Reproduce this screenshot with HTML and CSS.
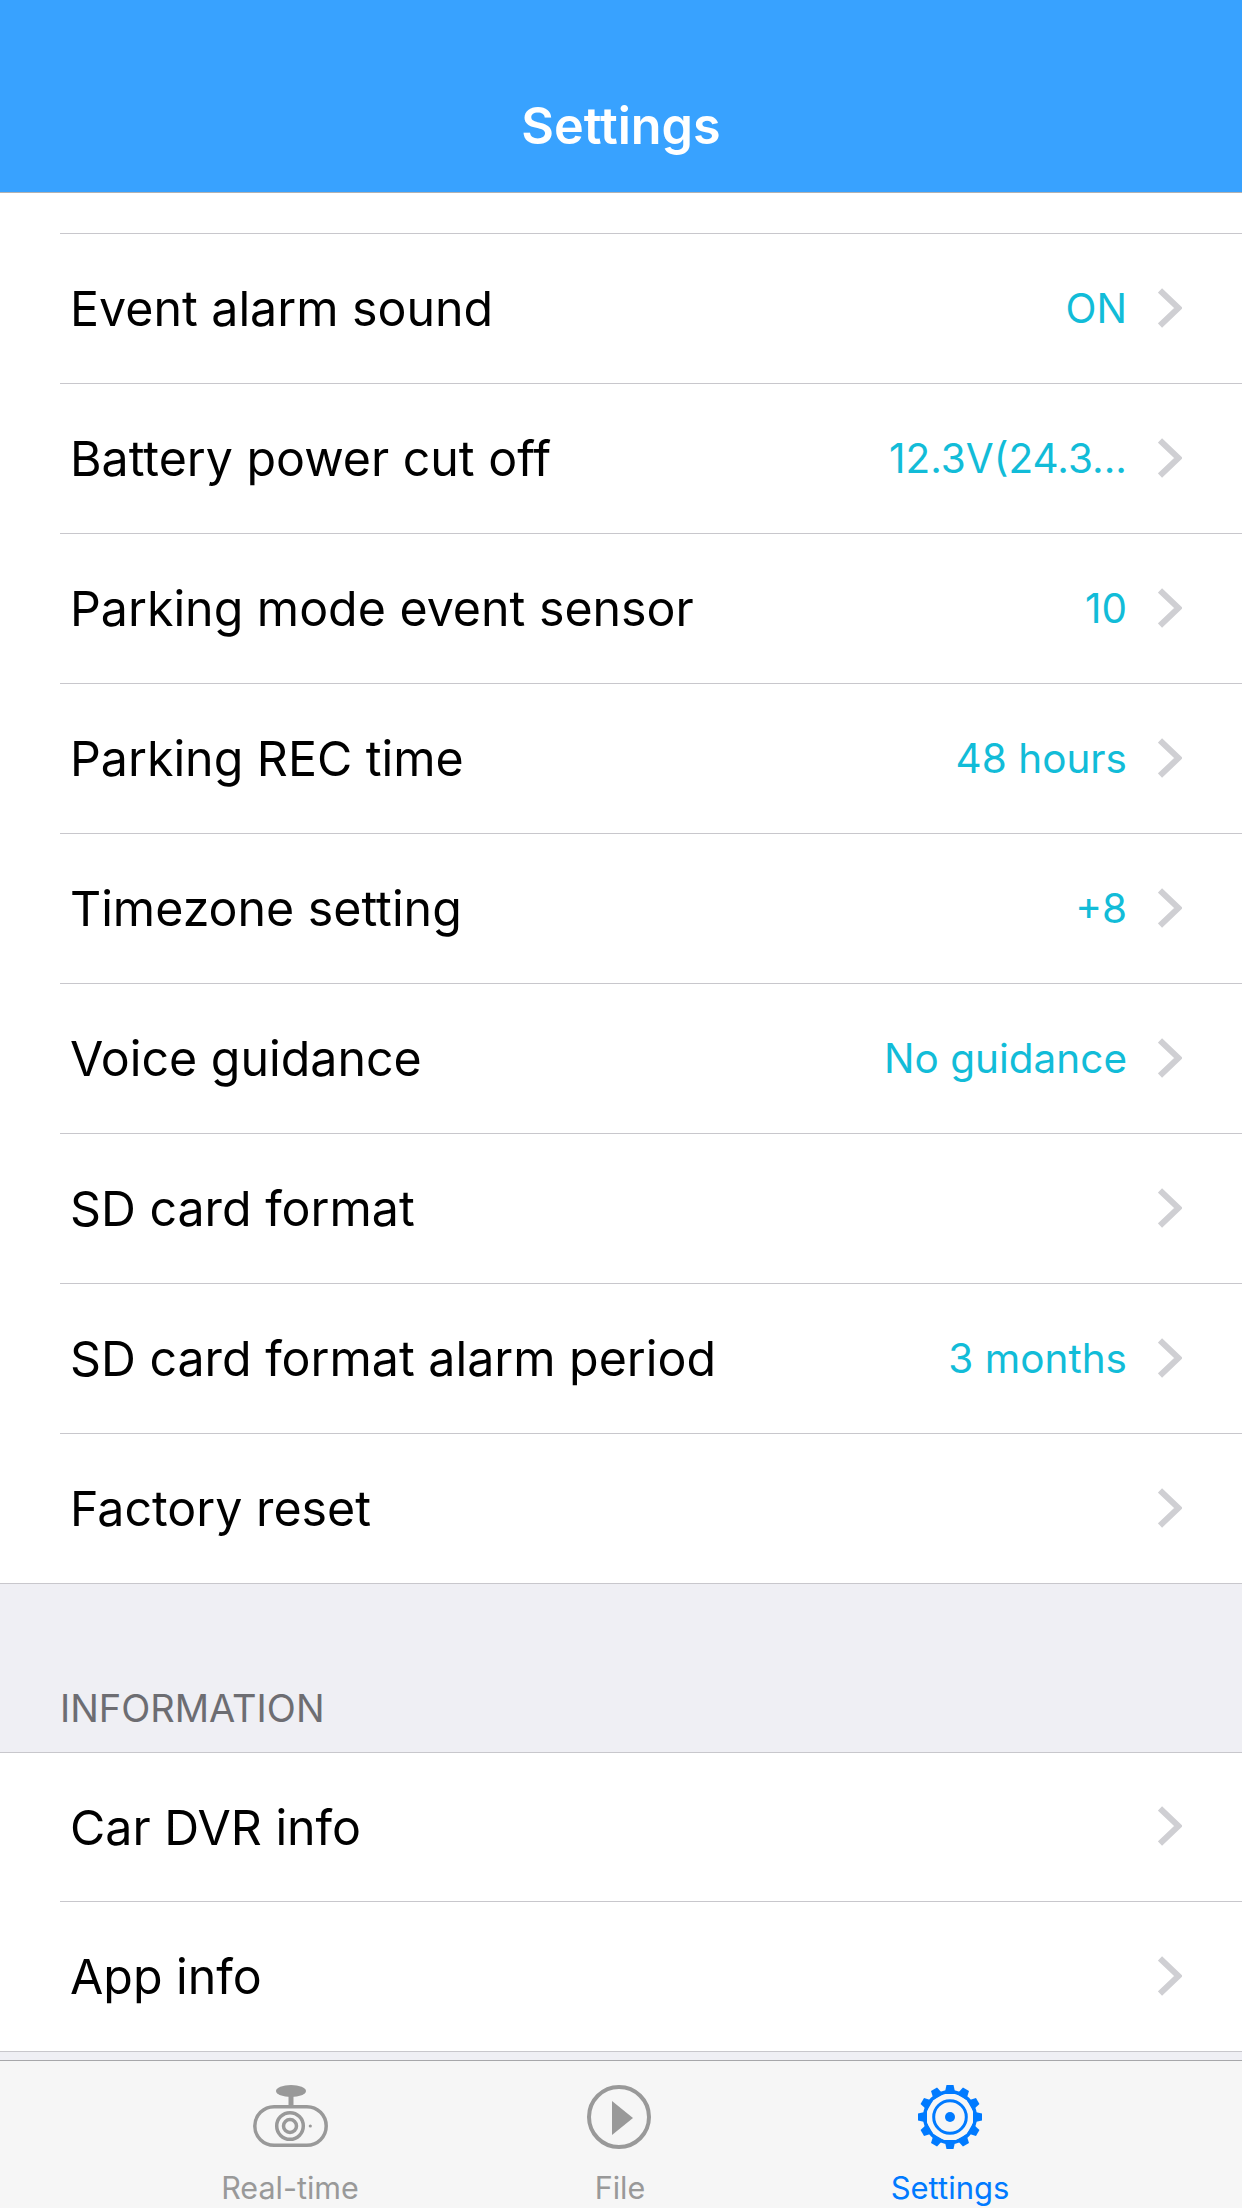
FILE: index.html
```html
<!DOCTYPE html>
<html lang="en">
<head>
<meta charset="utf-8">
<title>Settings</title>
<link rel="stylesheet" href="styles.css">
</head>
<body>
<div class="screen">
  <header class="navbar"><h1 class="navbar-title">Settings</h1></header>
  <main class="content">
    <div class="top-gap"></div>
    <ul class="group">
      <li class="row"><span class="row-label">Event alarm sound</span><span class="row-value">ON</span><svg class="chevron" viewBox="0 0 24 40"><path d="M2 2.500 20.500 20 2 37.500"/></svg></li>
      <li class="row"><span class="row-label">Battery power cut off</span><span class="row-value">12.3V(24.3...</span><svg class="chevron" viewBox="0 0 24 40"><path d="M2 2.500 20.500 20 2 37.500"/></svg></li>
      <li class="row"><span class="row-label">Parking mode event sensor</span><span class="row-value">10</span><svg class="chevron" viewBox="0 0 24 40"><path d="M2 2.500 20.500 20 2 37.500"/></svg></li>
      <li class="row"><span class="row-label">Parking REC time</span><span class="row-value">48 hours</span><svg class="chevron" viewBox="0 0 24 40"><path d="M2 2.500 20.500 20 2 37.500"/></svg></li>
      <li class="row"><span class="row-label">Timezone setting</span><span class="row-value">+8</span><svg class="chevron" viewBox="0 0 24 40"><path d="M2 2.500 20.500 20 2 37.500"/></svg></li>
      <li class="row"><span class="row-label">Voice guidance</span><span class="row-value">No guidance</span><svg class="chevron" viewBox="0 0 24 40"><path d="M2 2.500 20.500 20 2 37.500"/></svg></li>
      <li class="row"><span class="row-label">SD card format</span><svg class="chevron" viewBox="0 0 24 40"><path d="M2 2.500 20.500 20 2 37.500"/></svg></li>
      <li class="row"><span class="row-label">SD card format alarm period</span><span class="row-value">3 months</span><svg class="chevron" viewBox="0 0 24 40"><path d="M2 2.500 20.500 20 2 37.500"/></svg></li>
      <li class="row"><span class="row-label">Factory reset</span><svg class="chevron" viewBox="0 0 24 40"><path d="M2 2.500 20.500 20 2 37.500"/></svg></li>
    </ul>
    <h2 class="section-title">INFORMATION</h2>
    <ul class="group group-bordered">
      <li class="row"><span class="row-label">Car DVR info</span><svg class="chevron" viewBox="0 0 24 40"><path d="M2 2.500 20.500 20 2 37.500"/></svg></li>
      <li class="row"><span class="row-label">App info</span><svg class="chevron" viewBox="0 0 24 40"><path d="M2 2.500 20.500 20 2 37.500"/></svg></li>
    </ul>
  </main>
  <nav class="tabbar">
    <div class="tab">
      <svg class="tab-icon icon-gray" viewBox="0 0 84 72">
        <ellipse class="fill" cx="43" cy="10" rx="15" ry="6"/>
        <rect class="fill" x="40.500" y="13" width="5" height="13"/>
        <rect class="line" x="6.800" y="25.700" width="71.400" height="38.600" rx="19.300"/>
        <circle class="line" cx="42" cy="45" r="13.300"/>
        <circle class="line" cx="42" cy="45" r="6.500"/>
        <circle class="fill" cx="62.300" cy="45" r="1.600"/>
      </svg>
      <span class="tab-label">Real-time</span>
    </div>
    <div class="tab">
      <svg class="tab-icon icon-gray" viewBox="0 0 84 72">
        <circle class="line play-ring" cx="41" cy="36" r="30"/>
        <path class="fill" d="M34 20 55 37 34 54z"/>
      </svg>
      <span class="tab-label">File</span>
    </div>
    <div class="tab tab-active">
      <svg class="tab-icon icon-blue" viewBox="0 0 84 72">
        <circle class="line" cx="42" cy="36" r="25.300"/>
        <circle class="line gear-inner" cx="42" cy="36" r="16.300"/>
        <circle class="fill" cx="42" cy="36" r="5"/>
        <g class="fill">
          <path d="M38.500 4h7l2 9h-11z"/>
          <path d="M38.500 4h7l2 9h-11z" transform="rotate(30 42 36)"/>
          <path d="M38.500 4h7l2 9h-11z" transform="rotate(60 42 36)"/>
          <path d="M38.500 4h7l2 9h-11z" transform="rotate(90 42 36)"/>
          <path d="M38.500 4h7l2 9h-11z" transform="rotate(120 42 36)"/>
          <path d="M38.500 4h7l2 9h-11z" transform="rotate(150 42 36)"/>
          <path d="M38.500 4h7l2 9h-11z" transform="rotate(180 42 36)"/>
          <path d="M38.500 4h7l2 9h-11z" transform="rotate(210 42 36)"/>
          <path d="M38.500 4h7l2 9h-11z" transform="rotate(240 42 36)"/>
          <path d="M38.500 4h7l2 9h-11z" transform="rotate(270 42 36)"/>
          <path d="M38.500 4h7l2 9h-11z" transform="rotate(300 42 36)"/>
          <path d="M38.500 4h7l2 9h-11z" transform="rotate(330 42 36)"/>
        </g>
      </svg>
      <span class="tab-label">Settings</span>
    </div>
  </nav>
</div>
</body>
</html>
```
FILE: styles.css
```css
* { box-sizing: border-box; }
html, body { margin: 0; padding: 0; }
body { font-family: Inter, "Liberation Sans", sans-serif; background: #fff; }
ul { list-style: none; margin: 0; padding: 0; }

.screen { width: 1242px; height: 2208px; display: flex; flex-direction: column; overflow: hidden; background: #efeff4; }

.navbar { height: 193px; flex: none; background: #38a2ff; border-bottom: 1px solid #b2b2b2; display: flex; justify-content: center; align-items: flex-end; padding-bottom: 38px; }
.navbar-title { margin: 0; color: #fff; font-size: 50.300px; line-height: 56px; font-weight: 600; }

.content { flex: 1; min-height: 0; display: flex; flex-direction: column; }
.top-gap { height: 40px; background: #fff; flex: none; }

.group { background: #fff; flex: none; border-bottom: 1px solid #c8c7cc; }
.group-bordered { border-top: 1px solid #c8c7cc; }
.row { height: 150px; margin-left: 60px; padding: 0 60px 2px 10px; display: flex; align-items: center; border-top: 1px solid #c8c7cc; }
.group-bordered .row:first-child { border-top: 0; height: 148px; }
.row-label { flex: 1; padding-top: 3px; font-size: 48.300px; line-height: 56px; color: #000; white-space: nowrap; }
.row-value { padding-top: 3px; font-size: 40.500px; line-height: 50px; color: #12bcd8; margin-right: 31px; white-space: nowrap; }
.chevron { width: 24px; height: 40px; flex: none; }
.chevron path { fill: none; stroke: #cfcfd3; stroke-width: 6; }

.section-title { margin: 0; height: 168px; padding: 102px 0 0 60px; font-size: 38px; line-height: 44px; font-weight: 400; color: #6d6d72; }

.tabbar { margin-top: auto; height: 148px; flex: none; background: #f6f6f6; border-top: 1px solid #a7a7aa; display: flex; padding-left: 125px; }
.tab { width: 330px; display: flex; flex-direction: column; align-items: center; padding-top: 20px; }
.tab-icon { width: 84px; height: 72px; flex: none; }
.tab-label { margin-top: 17px; font-size: 30.500px; line-height: 36px; color: #999; white-space: nowrap; }
.tab-active .tab-label { font-size: 31px; color: #007aff; }
.icon-gray .fill { fill: #999; }
.icon-gray .line { fill: none; stroke: #999; stroke-width: 3.500; }
.icon-gray .play-ring { stroke-width: 4; }
.icon-blue .fill { fill: #007aff; }
.icon-blue .line { fill: none; stroke: #007aff; stroke-width: 3.500; }
.icon-blue .gear-inner { stroke-width: 3; }
```
